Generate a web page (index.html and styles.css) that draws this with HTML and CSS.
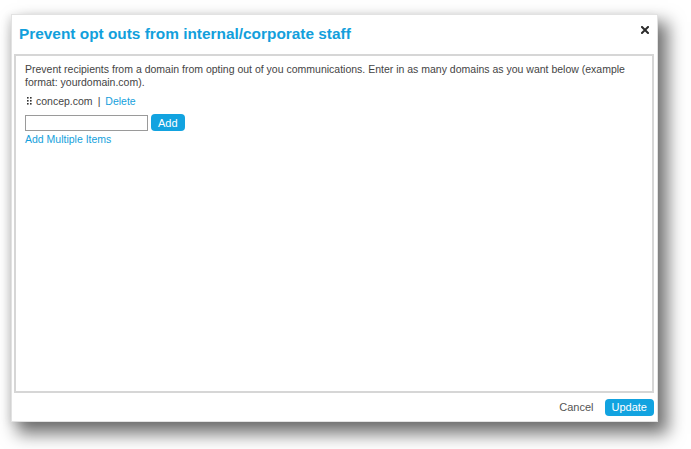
FILE: index.html
```html
<!DOCTYPE html>
<html lang="en">
<head>
  <meta charset="UTF-8" />
  <title>Prevent opt outs</title>
  <link rel="stylesheet" href="styles.css">
</head>
<body>
  <div class="dialog">
    <div class="dialog-header">
      <h1>Prevent opt outs from internal/corporate staff</h1>
      <svg class="close" width="8" height="8" viewBox="0 0 8 8">
        <path d="M1 1 L7 7 M7 1 L1 7" stroke="#2b2b2b" stroke-width="2" stroke-linecap="square" />
      </svg>
    </div>

    <div class="panel">
      <p class="intro">Prevent recipients from a domain from opting out of you communications. Enter in as many domains as you want below (example format: yourdomain.com).</p>

      <div class="item">
        <svg class="grip" width="5" height="8" viewBox="0 0 5 8">
          <rect x="0" y="0" width="1.6" height="1.6" fill="#333" />
          <rect x="3" y="0" width="1.6" height="1.6" fill="#333" />
          <rect x="0" y="3" width="1.6" height="1.6" fill="#333" />
          <rect x="3" y="3" width="1.6" height="1.6" fill="#333" />
          <rect x="0" y="6" width="1.6" height="1.6" fill="#333" />
          <rect x="3" y="6" width="1.6" height="1.6" fill="#333" />
        </svg>
        <span>concep.com</span>
        <span class="sep">|</span>
        <a href="#" class="link">Delete</a>
      </div>

      <div class="add-row">
        <input type="text" class="domain-input" />
        <button type="button" class="btn">Add</button>
      </div>
      <a href="#" class="link">Add Multiple Items</a>
    </div>

    <div class="dialog-footer">
      <a href="#" class="cancel">Cancel</a>
      <button type="button" class="btn btn-update">Update</button>
    </div>
  </div>
</body>
</html>
```

FILE: styles.css
```css
html, body {
  height: 100%;
}

body {
  margin: 0;
  box-sizing: border-box;
  padding: 14px 0 0 11px;
  background: #fff;
  font-family: "Liberation Sans", Arial, sans-serif;
}

.dialog {
  box-sizing: border-box;
  width: 647px;
  height: 408px;
  background: #fff;
  border: 1px solid #e2e2e2;
  box-shadow: 8px 10px 16px 2px rgba(0,0,0,0.55), -3px 2px 8px rgba(0,0,0,0.08);
  display: flex;
  flex-direction: column;
}

.dialog-header {
  height: 39px;
  display: flex;
  align-items: flex-start;
  justify-content: space-between;
  padding: 0 8px 0 7px;
}

h1 {
  margin: 10px 0 0;
  font-size: 15.4px;
  font-weight: bold;
  color: #129fdc;
}

.close {
  margin-top: 11px;
}

.panel {
  box-sizing: border-box;
  flex: 1;
  margin: 0 3px 0 2px;
  border: 2px solid #d6d6d6;
  padding: 7px 9px;
  font-size: 10.5px;
  color: #444;
}

.intro {
  margin: 0 0 4px;
  line-height: 13px;
}

.item {
  display: flex;
  align-items: center;
  gap: 3px;
  height: 16px;
  padding-left: 2px;
}

.grip {
  margin-right: 1px;
}

.sep {
  margin: 0 2px;
}

.link {
  color: #159fdc;
  text-decoration: none;
}

.add-row {
  display: flex;
  align-items: center;
  gap: 3px;
  margin-top: 5px;
}

.domain-input {
  box-sizing: border-box;
  width: 123px;
  height: 16px;
  margin: 0;
  border: 1px solid #9a9a9a;
  padding: 0 3px;
}

.btn {
  height: 17px;
  padding: 0 7px;
  border: none;
  border-radius: 4px;
  background: #12a3e0;
  color: #fff;
  font-family: inherit;
  font-size: 11px;
  cursor: pointer;
}

.add-row + .link {
  display: block;
  margin-top: 2px;
}

.dialog-footer {
  height: 28px;
  display: flex;
  align-items: center;
  justify-content: flex-end;
  gap: 11px;
  padding-right: 3px;
}

.cancel {
  color: #555;
  font-size: 11px;
  text-decoration: none;
}
```
